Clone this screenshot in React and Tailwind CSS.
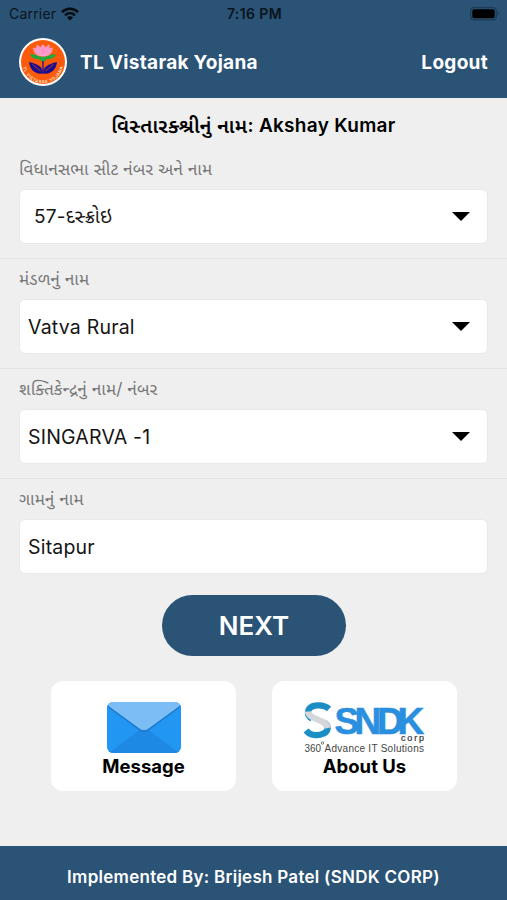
import React from "react";

function Wifi() {
  return (
    <svg width="18" height="14" viewBox="0 0 18 14" fill="none" stroke="#050b10" strokeWidth="2.5">
      <path d="M1 5.2C5.6.7 12.4.7 17 5.2" />
      <path d="M4 8.3c2.9-2.7 7.1-2.7 10 0" />
      <path d="M9 13.4 6 10.4c1.7-1.6 4.3-1.6 6 0Z" fill="#050b10" stroke="none" />
    </svg>
  );
}

function Battery() {
  return (
    <svg width="30" height="14" viewBox="0 0 30 14">
      <rect x="0.7" y="0.7" width="25.6" height="12.2" rx="3.4" fill="none" stroke="#1d3c54" strokeWidth="1.2" />
      <rect x="2.3" y="2.3" width="22.4" height="9" rx="1.8" fill="#000" />
      <path d="M27.6 4.8c1.8.6 1.8 3.4 0 4Z" fill="#1d3c54" />
    </svg>
  );
}

function LotusLogo() {
  return (
    <svg width="50" height="50" viewBox="0 0 50 50" className="shrink-0">
      <defs>
        <path id="ring" d="M4.700 26a20.300 20.300 0 0 0 40.600 0" />
      </defs>
      <circle cx="25" cy="25" r="24" fill="#fff" />
      <circle cx="25" cy="25" r="22" fill="#fb5a0b" />
      <path d="M12 17.500c4-.5 6 .5 8 1.500 3 1 7 1 10 0 2-1 4-2 8-1.500-1.500 3-4 4.500-7.500 4.500-2 0-3 1.500-5.500 3.500-2.500-2-3.500-3.500-5.500-3.500-3.500 0-6-1.500-7.500-4.500Z" fill="#20a83a" />
      <g fill="#fb93c6" stroke="#f9b9d9" strokeWidth=".5">
        <path d="M15.500 11c4.500 0 7.500 4 8.500 8-4.500 0-8-2-8.500-8ZM34.500 11c-4.500 0-7.500 4-8.500 8 4.500 0 8-2 8.500-8Z" />
        <path d="M19 8c4 2 5.500 6 5.500 11-5-1-6.500-6-5.500-11ZM31 8c-4 2-5.500 6-5.500 11 5-1 6.500-6 5.500-11Z" />
        <path d="M25 7.500c4 4 4 8 0 12-4-4-4-8 0-12Z" />
      </g>
      <g fill="#1c0d8f">
        <path d="M24.700 36.500c.2-7-5-9.500-13.700-11.500C12 33 17 37.500 24.700 36.500Z" />
        <path d="M25.300 36.500c-.2-7 5-9.500 13.700-11.500C38 33 33 37.500 25.300 36.500Z" />
        <path d="M24.400 24h1.200v13h-1.200Z" />
      </g>
      <path d="m14.500 27.500 8 6.500M35.500 27.500l-8 6.500" stroke="#fb5a0b" strokeWidth=".6" />
      <text fontFamily="Inter, sans-serif" fontSize="4.300" fontWeight="700" fill="#ffd9b8" textLength="56" lengthAdjust="spacing">
        <textPath href="#ring" startOffset="4">TL VISTARAK YOJANA</textPath>
      </text>
    </svg>
  );
}

function Envelope() {
  return (
    <svg width="74" height="51" viewBox="0 0 74 51">
      <defs>
        <clipPath id="env"><rect width="74" height="51" rx="6" /></clipPath>
      </defs>
      <g clipPath="url(#env)">
        <rect width="74" height="51" fill="#2196f3" />
        <path d="M2 51 31 29q6-4 12 0l29 22Z" fill="#1e88e5" />
        <path d="M0 3h74v1.500L41 28.800q-4 2.700-8 0L0 4.500Z" fill="#1976c8" />
        <path d="M0 0h74v3L41 27q-4 2.700-8 0L0 3Z" fill="#7dbdf5" />
      </g>
    </svg>
  );
}

function SndkLogo() {
  return (
    <svg width="122" height="54" viewBox="0 0 122 54" className="overflow-visible">
      <g fill="none" strokeWidth="6.200">
        <path d="M25 7C20 2 5 1.500 4 10c-.3 3 1 5 4 6.500" stroke="#1b8fc4" />
        <path d="M20 20.500c5.500 3 4.500 9-.5 11C14 34.500 6 33.500 2 28.500" stroke="#1b8fc4" />
        <path d="M4 9.500c1 9 18 7 20 16.500" stroke="#d5d7da" />
      </g>
      <text x="30.500 50.500 73 93.500" y="31.500" fontFamily="Liberation Sans, Arial, sans-serif" fontSize="37" fontWeight="700" fill="#2b8fe0" stroke="#2b8fe0" strokeWidth=".6">SNDK</text>
      <text x="97" y="38.500" fontFamily="Liberation Sans, Arial, sans-serif" fontSize="9" fill="#333" stroke="#333" strokeWidth=".2" textLength="23" lengthAdjust="spacing">corp</text>
      <text x="0.500" y="49.500" fontFamily="Liberation Sans, Arial, sans-serif" fontSize="10" fill="#444" textLength="16.500" lengthAdjust="spacingAndGlyphs">360</text>
      <circle cx="18.500" cy="41" r="1.200" fill="none" stroke="#444" strokeWidth=".7" />
      <text x="20.500" y="49.500" fontFamily="Liberation Sans, Arial, sans-serif" fontSize="10" fill="#444" textLength="99.500" lengthAdjust="spacing">Advance IT Solutions</text>
    </svg>
  );
}

function Field({ label, value, select, indent, last }) {
  return (
    <div className={"flex h-[110px] flex-col px-[19px] " + (last ? "" : "border-b border-[#e4e4e4]")}>
      <label className="flex h-10 shrink-0 items-center pt-[2px] whitespace-nowrap text-[17px] tracking-[0.200px] text-[#777]">{label}</label>
      <div className={"flex h-[55px] shrink-0 items-center justify-between rounded-md border border-[#e9e9e9] bg-white pr-[17px] text-[#151515] " + (indent ? "pl-[14px] text-[19px] tracking-[0.200px]" : "pl-2 text-[19.500px] tracking-[0.200px]")}>
        <span className="pt-[2px]">{value}</span>
        {select && (
          <svg width="18" height="9" viewBox="0 0 18 9"><path d="M0 0h18L9 9Z" fill="#000" /></svg>
        )}
      </div>
    </div>
  );
}

function Card({ children, title }) {
  return (
    <button className="flex h-[110px] w-[185px] flex-col items-center rounded-xl bg-white pt-[21px]">
      <span className="flex h-[51px] items-start">{children}</span>
      <span className="text-[18.500px] leading-[26px] font-bold text-black">{title}</span>
    </button>
  );
}

export default function App() {
  return (
    <div className="flex h-[900px] w-[507px] flex-col overflow-hidden bg-[#efefef] font-['Inter','Noto_Sans','Noto_Sans_Gujarati',sans-serif]">
      <header className="h-[98px] shrink-0 bg-[#2a5375]">
        <div className="grid h-[27px] grid-cols-3 items-center pr-[7px] pl-[9px] text-[14px] tracking-[0.200px] text-[#0a141c]">
          <span className="flex items-center gap-[5px]">Carrier <Wifi /></span>
          <span className="text-center font-semibold tracking-[0.400px]">7:16 PM</span>
          <span className="flex justify-end"><Battery /></span>
        </div>
        <div className="flex h-[70px] items-center pr-[19px] pl-[18px] text-[19px] font-bold tracking-[0.300px] text-white">
          <LotusLogo />
          <span className="ml-3 pt-[2px]">TL Vistarak Yojana</span>
          <span className="ml-auto pt-[2px]">Logout</span>
        </div>
      </header>
      <main className="flex flex-1 flex-col">
        <h1 className="flex h-[51px] shrink-0 items-center justify-center pt-[5px] text-[19px] font-semibold tracking-[0.300px] whitespace-pre text-black">
          <span className="text-[20px]">વિસ્તારક્શ્રીનું નામ</span>: Akshay Kumar
        </h1>
        <Field label="વિધાનસભા સીટ નંબર અને નામ" value="57-દસ્ક્રોઇ" select indent />
        <Field label="મંડળનું નામ" value="Vatva Rural" select />
        <Field label="શક્તિકેન્દ્રનું નામ/ નંબર" value="SINGARVA -1" select />
        <Field label="ગામનું નામ" value="Sitapur" last />
        <button className="mt-[6px] ml-[162px] h-[61px] w-[184px] rounded-full bg-[#2a5375] text-[26px] font-semibold text-white">NEXT</button>
        <div className="mt-[25px] flex gap-9 pl-[51px]">
          <Card title="Message"><Envelope /></Card>
          <Card title="About Us"><SndkLogo /></Card>
        </div>
      </main>
      <footer className="flex h-[54px] shrink-0 items-center justify-center bg-[#2a5375] pt-[10px] text-[17px] font-semibold tracking-[0.270px] text-white">
        Implemented By: Brijesh Patel (SNDK CORP)
      </footer>
    </div>
  );
}
